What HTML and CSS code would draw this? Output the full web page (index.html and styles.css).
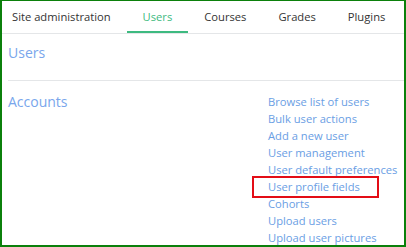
FILE: index.html
```html
<!DOCTYPE html>
<html lang="en">
<head>
    <meta charset="UTF-8">
    <title>Site administration - Users</title>
    <link rel="stylesheet" href="styles.css">
</head>
<body>
    <div class="frame">
        <ul class="tabs">
            <li class="tab first">Site administration</li>
            <li class="tab active">Users</li>
            <li class="tab">Courses</li>
            <li class="tab">Grades</li>
            <li class="tab">Plugins</li>
        </ul>

        <div class="content">
            <h2 class="section-title">Users</h2>

            <div class="section">
                <h3 class="category">Accounts</h3>
                <ul class="links">
                    <li><a href="#">Browse list of users</a></li>
                    <li><a href="#">Bulk user actions</a></li>
                    <li><a href="#">Add a new user</a></li>
                    <li><a href="#">User management</a></li>
                    <li><a href="#">User default preferences</a></li>
                    <li class="marked"><a href="#">User profile fields</a></li>
                    <li><a href="#">Cohorts</a></li>
                    <li><a href="#">Upload users</a></li>
                    <li><a href="#">Upload user pictures</a></li>
                </ul>
            </div>
        </div>
    </div>
</body>
</html>
```

FILE: styles.css
```css
:root {
    --frame-color: #0b800b;
    --tab-text: #333;
    --active-color: #3dba80;
    --line-color: #e4e6e8;
    --heading-color: #79a6ec;
    --link-color: #6a9ee4;
    --mark-color: #e30d16;
    --font-family: 'Open Sans', 'Liberation Sans', sans-serif;
}

html, body {
    margin: 0;
    padding: 0;
    background: #fff;
}

body {
    font-family: var(--font-family);
    width: 406px;
    height: 247px;
    overflow: hidden;
}

.frame {
    box-sizing: border-box;
    height: 247px;
    border: 2px solid var(--frame-color);
    border-top-width: 1px;
    overflow: hidden;
}

.tabs {
    display: flex;
    list-style: none;
    margin: 0;
    padding: 0;
    height: 32px;
    border-bottom: 1px solid var(--line-color);
}

.tab {
    padding: 0 16px;
    font-size: 11.2px;
    line-height: 31px;
    white-space: nowrap;
    color: var(--tab-text);
    border-bottom: 2px solid transparent;
}

.tab.first {
    padding-left: 10px;
}

.tab.active {
    color: var(--active-color);
    border-bottom-color: var(--active-color);
}

.content {
    padding-left: 6px;
}

.section-title {
    margin: 0;
    padding: 9px 0 0;
    height: 37px;
    font-size: 14px;
    font-weight: normal;
    line-height: 20px;
    color: var(--heading-color);
    border-bottom: 1px solid var(--line-color);
}

.section {
    display: grid;
    grid-template-columns: 260px 1fr;
    padding-top: 12px;
}

.category {
    margin: 0;
    font-size: 14px;
    font-weight: normal;
    line-height: 17px;
    color: var(--heading-color);
}

.links {
    list-style: none;
    margin: 0;
    padding: 0;
}

.links li {
    font-size: 11.2px;
    line-height: 17px;
    white-space: nowrap;
}

.links a {
    color: var(--link-color);
    text-decoration: none;
}

.marked {
    position: relative;
}

.marked::after {
    content: "";
    position: absolute;
    left: -16px;
    top: -2px;
    width: 123px;
    height: 18px;
    border: 2px solid var(--mark-color);
}
```
